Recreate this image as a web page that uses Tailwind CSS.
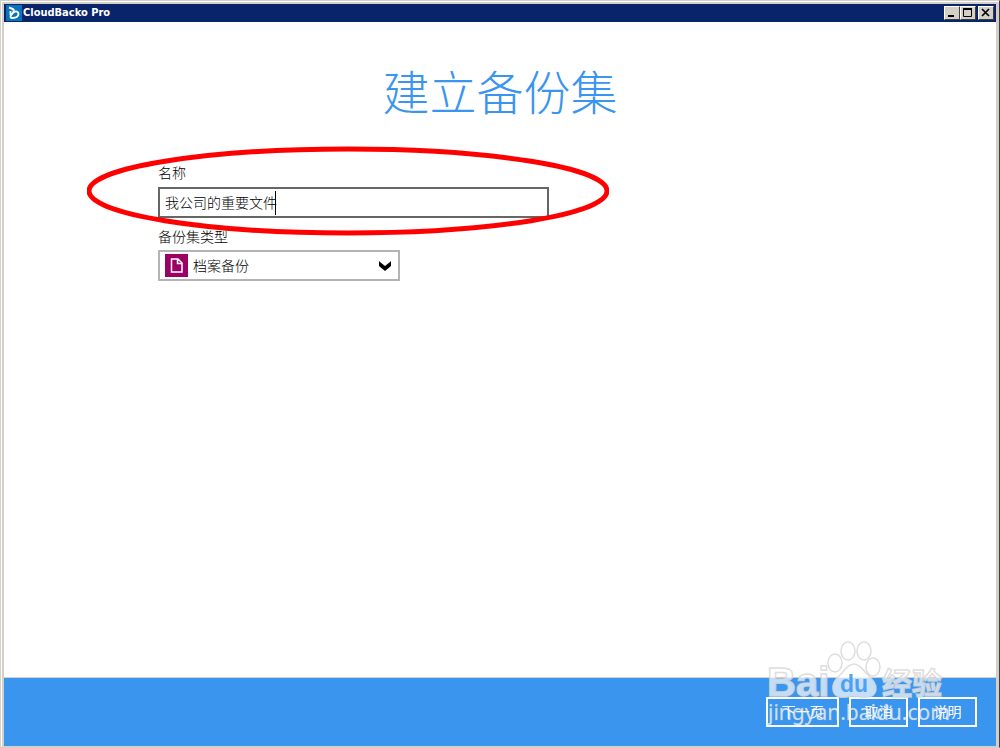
<!DOCTYPE html>
<html lang="zh-CN">
<head>
  <meta charset="UTF-8" />
  <meta name="viewport" content="width=device-width, initial-scale=1.0" />
  <title>CloudBacko Pro</title>
  <script src="https://cdn.jsdelivr.net/npm/@tailwindcss/browser@4"></script>
</head>
<body class="bg-[#d4d0c8] font-['Liberation_Sans','Noto_Sans_CJK_SC',sans-serif] text-sm text-black">
  <div class="relative flex flex-col h-screen overflow-hidden border border-t-[#d4d0c8] border-l-[#d4d0c8] border-r-[#404040] border-b-[#d4d0c8]">
    <div class="flex flex-col flex-1 border-t border-l border-white pt-[2px] pl-[2px] pr-[3px] pb-px">

      <!-- Title bar -->
      <header class="flex items-center h-[18px] bg-[#0a246a] pl-[2px] pr-[2px]">
        <svg class="w-4 h-4 shrink-0" viewBox="0 0 16 16">
          <rect width="16" height="16" fill="#0873bd" />
          <path d="M3 2.500l4 1.500c1.500 1.500 1 3-.5 4.500C4 10.500 4 13 6 13c4 .3 6.500-1.500 6.500-4S10 6 7.500 7M4.500 6v4" fill="none" stroke="#fff" stroke-width="1.900" />
        </svg>
        <span class="flex-1 pl-px text-[11px] leading-4 font-bold text-white font-['DejaVu_Sans_Condensed','DejaVu_Sans',sans-serif]">CloudBacko Pro</span>
        <div class="flex">
          <button aria-label="Minimize" class="w-4 h-[14px] bg-[#d4d0c8] border border-t-white border-l-white border-r-[#404040] border-b-[#404040]">
            <svg class="block w-[14px] h-3" viewBox="0 0 14 12"><path d="M3 9h6" stroke="#000" stroke-width="2" /></svg>
          </button>
          <button aria-label="Maximize" class="w-4 h-[14px] bg-[#d4d0c8] border border-t-white border-l-white border-r-[#404040] border-b-[#404040]">
            <svg class="block w-[14px] h-3" viewBox="0 0 14 12"><path d="M2.500 2v7.500h8V2" fill="none" stroke="#000" stroke-width="1" /><path d="M2 2h9" stroke="#000" stroke-width="2" /></svg>
          </button>
          <button aria-label="Close" class="ml-[2px] w-4 h-[14px] bg-[#d4d0c8] border border-t-white border-l-white border-r-[#404040] border-b-[#404040]">
            <svg class="block w-[14px] h-3" viewBox="0 0 14 12"><path d="M3 2l7 7M10 2l-7 7" stroke="#000" stroke-width="1.700" /></svg>
          </button>
        </div>
      </header>

      <!-- Form -->
      <main class="flex-1 bg-white border-b border-[#d4d0c8]">
        <h1 class="pt-[38px] text-center text-[47px] leading-[68px] font-light text-[#3a95ee]">建立备份集</h1>
        <form id="backupForm" class="ml-[154px] pt-[35px] font-light">
          <label for="setName" class="block h-6 leading-5">名称</label>
          <div class="relative w-[391px]">
            <input id="setName" type="text" value="我公司的重要文件" class="block w-full h-[31px] px-[5px] pb-[2px] border-2 border-[#666] bg-white outline-none" />
            <span class="absolute left-[117px] top-1 w-px h-6 bg-black"></span>
          </div>
          <label for="setType" class="block h-8 pt-[9px] leading-5">备份集类型</label>
          <div class="relative w-[242px]">
            <select id="setType" class="block w-full h-[31px] pl-[33px] border-2 border-[#b4b4b4] bg-white appearance-none">
              <option>档案备份</option>
            </select>
            <svg class="absolute left-[7px] top-1 w-[23px] h-[23px] pointer-events-none" viewBox="0 0 23 23">
              <rect width="23" height="23" fill="#9b0065" />
              <path d="M6.500 5h6.500l4 4v9H6.500zM12.500 5v4.500h4.500" fill="none" stroke="#fff" stroke-width="1.500" />
            </svg>
            <svg class="absolute right-[9px] top-[11px] w-3 h-[10px] pointer-events-none" viewBox="0 0 12 10">
              <path d="M0 0l1 1 5 4 5-4 1-1v5L6 10 0 5z" fill="#000" />
            </svg>
          </div>
        </form>
      </main>

      <!-- Actions -->
      <footer class="flex justify-end items-start gap-[10px] h-[68px] pt-[19px] pr-[19px] bg-[#3a95ee] text-white">
        <button type="submit" form="backupForm" class="w-[73px] h-[30px] border-2 border-white">下一页</button>
        <button type="button" class="w-[59px] h-[30px] border-2 border-white">取消</button>
        <button type="button" class="w-[59px] h-[30px] border-2 border-white">说明</button>
      </footer>
    </div>

    <!-- Red ring around the name field -->
    <svg class="absolute left-[86px] top-[145px] w-[522px] h-[90px] pointer-events-none" viewBox="0 0 522 90">
      <ellipse cx="261" cy="45" rx="259" ry="42" fill="none" stroke="#f00" stroke-width="5" />
    </svg>

    <!-- Watermark -->
    <svg class="absolute right-[39px] bottom-[14px] w-[200px] h-[100px] pointer-events-none" viewBox="0 0 200 100">
      <g fill="#fff" fill-opacity=".7" stroke="#d5d5d5" stroke-opacity=".8" stroke-width="1.500">
        <ellipse cx="75" cy="30" rx="7" ry="9" />
        <ellipse cx="88" cy="18" rx="7" ry="9" />
        <ellipse cx="104" cy="18" rx="7" ry="9" />
        <ellipse cx="113" cy="34" rx="7" ry="9" />
        <path d="M94 31c-7 0-9 7-14 11-6 5-8 9-7 15 1 7 8 8 14 7 5-1 9-1 14 0 7 1 14 0 15-7 1-6-3-10-8-15-5-4-7-11-14-11z" />
        <text x="7" y="63" font-family="Liberation Sans" font-size="40" font-weight="700">Bai</text>
        <text x="122" y="61" font-family="Noto Sans CJK SC" font-size="30" font-weight="700">经验</text>
      </g>
      <text x="80" y="59" font-family="Liberation Sans" font-size="23" font-weight="700" fill="#3a95ee" fill-opacity=".85">du</text>
      <text x="8" y="87" font-family="Noto Sans" font-size="21" font-weight="400" fill="#fff" fill-opacity=".75" stroke="#c8c8c8" stroke-opacity=".5" stroke-width=".5">jingyan.baidu.com</text>
    </svg>
  </div>
</body>
</html>
